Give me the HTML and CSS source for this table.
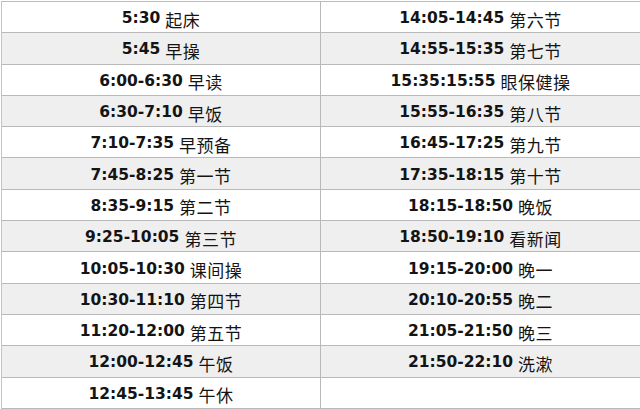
FILE: index.html
```html
<!DOCTYPE html>
<html lang="zh">
<head>
<meta charset="utf-8">
<title>作息时间表</title>
<link rel="stylesheet" href="styles.css">
</head>
<body>
<div class="sheet">
  <div class="row"><div class="cell"><b>5:30</b><span>起床</span></div><div class="cell"><b>14:05-14:45</b><span>第六节</span></div></div>
  <div class="row alt"><div class="cell"><b>5:45</b><span>早操</span></div><div class="cell"><b>14:55-15:35</b><span>第七节</span></div></div>
  <div class="row"><div class="cell"><b>6:00-6:30</b><span>早读</span></div><div class="cell"><b>15:35:15:55</b><span>眼保健操</span></div></div>
  <div class="row alt"><div class="cell"><b>6:30-7:10</b><span>早饭</span></div><div class="cell"><b>15:55-16:35</b><span>第八节</span></div></div>
  <div class="row"><div class="cell"><b>7:10-7:35</b><span>早预备</span></div><div class="cell"><b>16:45-17:25</b><span>第九节</span></div></div>
  <div class="row alt"><div class="cell"><b>7:45-8:25</b><span>第一节</span></div><div class="cell"><b>17:35-18:15</b><span>第十节</span></div></div>
  <div class="row"><div class="cell"><b>8:35-9:15</b><span>第二节</span></div><div class="cell"><b>18:15-18:50</b><span>晚饭</span></div></div>
  <div class="row alt"><div class="cell"><b>9:25-10:05</b><span>第三节</span></div><div class="cell"><b>18:50-19:10</b><span>看新闻</span></div></div>
  <div class="row"><div class="cell"><b>10:05-10:30</b><span>课间操</span></div><div class="cell"><b>19:15-20:00</b><span>晚一</span></div></div>
  <div class="row alt"><div class="cell"><b>10:30-11:10</b><span>第四节</span></div><div class="cell"><b>20:10-20:55</b><span>晚二</span></div></div>
  <div class="row"><div class="cell"><b>11:20-12:00</b><span>第五节</span></div><div class="cell"><b>21:05-21:50</b><span>晚三</span></div></div>
  <div class="row alt"><div class="cell"><b>12:00-12:45</b><span>午饭</span></div><div class="cell"><b>21:50-22:10</b><span>洗漱</span></div></div>
  <div class="row"><div class="cell"><b>12:45-13:45</b><span>午休</span></div><div class="cell"></div></div>
</div>
</body>
</html>
```
FILE: styles.css
```css
html, body {
  margin: 0;
  padding: 0;
  background: #ffffff;
}
body {
  font-family: "Noto Sans CJK SC", sans-serif;
  color: #141414;
}
.sheet {
  margin: 1px 0 0 1px;
  width: 641px;
  border-top: 1px solid #bcbcbc;
  border-left: 1px solid #c4c4c4;
}
.row {
  display: flex;
  height: 31.3px;
  box-sizing: border-box;
  border-bottom: 1px solid #b9b9b9;
  background: #ffffff;
}
.row.alt {
  background: #efefef;
}
.cell {
  width: 319px;
  flex: none;
  box-sizing: border-box;
  border-right: 1px solid #b9b9b9;
  display: flex;
  align-items: center;
  justify-content: center;
  padding-top: 2px;
}
.cell + .cell {
  width: 320px;
}
.cell b {
  font-family: "DejaVu Sans", sans-serif;
  font-weight: bold;
  font-size: 15.5px;
}
.cell span {
  font-family: "Noto Sans CJK SC", sans-serif;
  font-weight: normal;
  font-size: 17px;
  letter-spacing: 0.5px;
  margin-left: 5px;
  position: relative;
  top: 1px;
}
```
